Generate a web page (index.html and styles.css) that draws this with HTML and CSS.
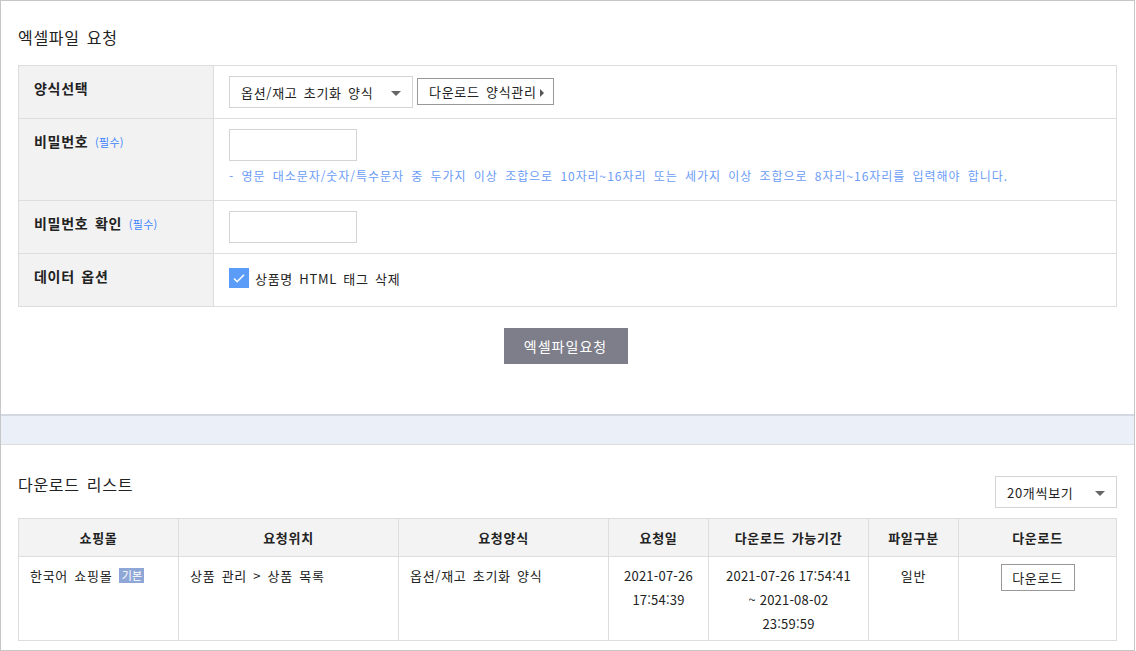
FILE: index.html
```html
<!DOCTYPE html>
<html lang="ko">
  <head>
    <meta charset="UTF-8" />
    <meta name="viewport" content="width=device-width, initial-scale=1.0" />
    <title>엑셀파일 요청</title>
    <link rel="stylesheet" href="styles.css">
  </head>
  <body>
    <div class="wrap">
      <div class="section">
        <h2 class="title">엑셀파일 요청</h2>
        <table class="form">
          <tr>
            <th>양식선택</th>
            <td>
              <div class="row">
                <div class="select wide">옵션/재고 초기화 양식</div>
                <button class="btn more">다운로드 양식관리</button>
              </div>
            </td>
          </tr>
          <tr class="tall">
            <th>비밀번호 <span class="req">(필수)</span></th>
            <td>
              <input class="input" type="password">
              <p class="hint">- 영문 대소문자/숫자/특수문자 중 두가지 이상 조합으로 10자리~16자리 또는 세가지 이상 조합으로 8자리~16자리를 입력해야 합니다.</p>
            </td>
          </tr>
          <tr>
            <th>비밀번호 확인 <span class="req">(필수)</span></th>
            <td><input class="input" type="password"></td>
          </tr>
          <tr>
            <th>데이터 옵션</th>
            <td>
              <label class="check">
                <span class="box">
                  <svg width="20" height="20" viewBox="0 0 20 20"><path d="M5 10.5l3.2 3.2L15 6.8" fill="none" stroke="#fff" stroke-width="1.6"/></svg>
                </span>
                상품명 HTML 태그 삭제
              </label>
            </td>
          </tr>
        </table>
        <div class="actions">
          <button class="btn-submit">엑셀파일요청</button>
        </div>
      </div>

      <div class="band"></div>

      <div class="section list">
        <div class="list-head">
          <h2 class="title">다운로드 리스트</h2>
          <div class="select small">20개씩보기</div>
        </div>
        <table class="grid">
          <colgroup>
            <col style="width:160px">
            <col style="width:220px">
            <col style="width:210px">
            <col style="width:100px">
            <col style="width:160px">
            <col style="width:90px">
            <col>
          </colgroup>
          <tr>
            <th>쇼핑몰</th>
            <th>요청위치</th>
            <th>요청양식</th>
            <th>요청일</th>
            <th>다운로드 가능기간</th>
            <th>파일구분</th>
            <th>다운로드</th>
          </tr>
          <tr class="item">
            <td class="left">한국어 쇼핑몰 <span class="badge">기본</span></td>
            <td class="left">상품 관리 &gt; 상품 목록</td>
            <td class="left">옵션/재고 초기화 양식</td>
            <td class="date">2021-07-26<br>17:54:39</td>
            <td class="date">2021-07-26 17:54:41<br>~ 2021-08-02<br>23:59:59</td>
            <td>일반</td>
            <td><button class="btn">다운로드</button></td>
          </tr>
        </table>
      </div>
    </div>
  </body>
</html>
```

FILE: styles.css
```css
body {
  margin: 0;
  font-family: "Noto Sans CJK KR", "Noto Sans", sans-serif;
  font-size: 13px;
  letter-spacing: 0.7px;
  word-spacing: 2px;
  color: #333;
  background: #fff;
}
.wrap {
  width: 1133px;
  border: 1px solid #c6c6c6;
  border-bottom: none;
}
.section {
  padding: 26px 17px 50px;
}
.title {
  margin: 0 0 18px;
  font-size: 16px;
  font-weight: normal;
  line-height: 20px;
  color: #222;
}
table {
  width: 100%;
  border-collapse: collapse;
}
.form tr {
  height: 53px;
}
.form tr.tall {
  height: 82px;
}
.form th,
.form td {
  border: 1px solid #ddd;
  text-align: left;
  vertical-align: top;
}
.form th {
  width: 164px;
  padding: 12px 15px;
  background: #f2f2f2;
  font-size: 14px;
  line-height: 20px;
  color: #222;
}
.form td {
  padding: 10px 15px 9px;
}
.req {
  font-size: 11px;
  font-weight: normal;
  letter-spacing: 0.3px;
  color: #3d85ff;
}
.row {
  display: flex;
  align-items: flex-start;
  gap: 4px;
}
.select {
  display: inline-flex;
  align-items: center;
  box-sizing: border-box;
  height: 32px;
  padding: 0 11px;
  border: 1px solid #d4d4d4;
  font-size: 13px;
  color: #222;
  vertical-align: top;
  position: relative;
}
.select::after {
  content: "";
  position: absolute;
  right: 11px;
  top: 14px;
  border-left: 5px solid transparent;
  border-right: 5px solid transparent;
  border-top: 5px solid #666;
}
.select.wide {
  width: 184px;
}
.btn {
  box-sizing: border-box;
  height: 27px;
  padding: 0 10px;
  border: 1px solid #999;
  background: #fff;
  font-family: inherit;
  font-size: 13px;
  letter-spacing: 0.7px;
  word-spacing: 2px;
  color: #222;
  vertical-align: top;
}
.btn.more {
  margin-top: 2px;
  padding: 0 9px 0 11px;
}
.btn.more::after {
  content: "";
  display: inline-block;
  margin-left: 3px;
  border-top: 4px solid transparent;
  border-bottom: 4px solid transparent;
  border-left: 4px solid #555;
}
.input {
  display: block;
  box-sizing: border-box;
  width: 128px;
  height: 32px;
  border: 1px solid #d4d4d4;
  margin: 0;
}
.hint {
  margin: 6px 0 5px;
  font-size: 12px;
  line-height: 18px;
  letter-spacing: 0.95px;
  word-spacing: 3px;
  color: #6b9cf6;
}
.check {
  display: flex;
  align-items: center;
  gap: 6px;
  margin-top: 4px;
  font-size: 13px;
  color: #222;
}
.box {
  width: 20px;
  height: 20px;
  background: #5a9cf8;
  display: flex;
}
.actions {
  text-align: center;
  margin-top: 21px;
  padding-right: 4px;
}
.btn-submit {
  width: 124px;
  height: 36px;
  border: none;
  background: #7d7e8a;
  color: #fff;
  font-family: inherit;
  font-size: 14px;
  letter-spacing: 1px;
}
.band {
  height: 28px;
  background: #ebeff8;
  border-top: 2px solid #d3d8e2;
  border-bottom: 1px solid #ddd;
}
.list {
  padding: 29px 17px 9px;
  border-bottom: 1px solid #c6c6c6;
}
.list-head {
  display: flex;
  justify-content: space-between;
  align-items: flex-start;
  margin-bottom: 10px;
}
.list-head .title {
  margin: 0;
}
.select.small {
  width: 122px;
  margin: 2px 0 0;
}
.grid th,
.grid td {
  border: 1px solid #ddd;
  text-align: center;
  vertical-align: top;
  line-height: 24px;
}
.grid th {
  height: 37px;
  padding: 0;
  vertical-align: middle;
  background: #f3f3f3;
  color: #222;
}
.grid .item {
  height: 84px;
}
.grid td {
  padding: 7px 11px 4px;
  color: #222;
}
.grid td.left {
  text-align: left;
}
.grid td.date {
  letter-spacing: 0.2px;
  word-spacing: 0;
}
.badge {
  display: inline-block;
  padding: 0 2px 0 3px;
  background: #8fa7d6;
  color: #fff;
  font-size: 11px;
  letter-spacing: 0.3px;
  line-height: 15px;
  vertical-align: 1px;
}
.grid .btn {
  width: 74px;
  margin-top: 0;
}
```
